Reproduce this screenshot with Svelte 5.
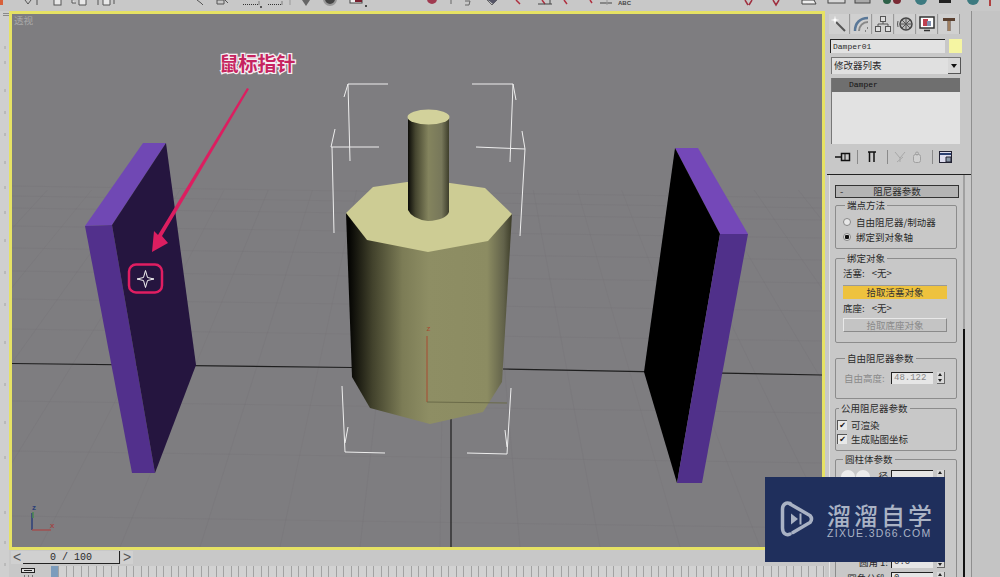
<script>
  // perspective floor grid of the viewport, in page coordinates
  const vanish = { x: 451, y: -250 };
  const floorTop = 190;
  const floorBottom = 547;
  const gridRays = [];
  for (let x = -600; x <= 1500; x += 80) {
    const t = (floorTop - vanish.y) / (floorBottom - vanish.y);
    gridRays.push({ x1: vanish.x + (x - vanish.x) * t, x2: x });
  }
  const gridRows = [190, 200, 212, 230, 252, 275, 303, 333, 405, 455, 520];
  const leftMarks = [35, 50, 78, 100, 122, 150, 175, 200, 228, 260, 292, 330, 372, 410, 445, 500, 530, 552];
</script>

<div class="app">
  <div class="toolbar">
    <svg viewBox="0 0 1000 11" width="1000" height="11">
      <rect x="0" y="0" width="3" height="5" fill="#d8603a" />
      <g fill="none" stroke="#555" stroke-width="1">
        <path d="M25 0l3 4 3-4M37 0v5" />
        <rect x="54" y="-3" width="7" height="8" fill="#e8e8e8" />
        <path d="M72 0v3h4M79 -3h7v8h-7z" fill="#e8e8e8" />
        <path d="M98 0v5M103 -3h7v8h-7zM114 0v4" fill="#e8e8e8" />
        <path d="M197 0l4 3 2 2M217 0h7v4h-7zM225 0l3 3" />
      </g>
      <g fill="none" stroke="#333" stroke-dasharray="1 1">
        <path d="M243 4.500h16v-4M268 4.500h14v-4" />
      </g>
      <circle cx="261" cy="7" r="1" fill="#333" />
      <path d="M290 0v5" stroke="#999" />
      <path d="M302 0h8l-4 6z" fill="#666" />
      <circle cx="330" cy="-1" r="6" fill="#444" stroke="#999" stroke-width="2" />
      <rect x="350" y="-2" width="12" height="5" fill="#eee" stroke="#444" />
      <rect x="355" y="-2" width="7" height="4" fill="#7a2030" />
      <circle cx="366" cy="6" r="1" fill="#222" />
      <circle cx="432" cy="-1" r="5" fill="#a03a50" />
      <path d="M451 0v4M465 1h5l-1 4h-4M487 0l5 5 5-5z" stroke="#666" fill="none" />
      <path d="M488 0h9l-4 4z" fill="#556" />
      <g stroke="#b03040" stroke-width="1.500" fill="none">
        <path d="M516 0l4 4M542 0l3 4M564 0l3 4M590 0l2 3" />
      </g>
      <path d="M538 4h14M550 0v4M600 3h12" stroke="#444" fill="none" />
      <path d="M607 0v5" stroke="#999" />
      <text class="abc" x="618" y="5">ABC</text>
      <g stroke="#a03040" stroke-width="1.500" fill="none">
        <path d="M745 0l3 5M752 0l-3 5M773 0l3 5 3-5" />
      </g>
      <path d="M802 0h12l2 4h-14z" fill="#eee" stroke="#444" />
      <rect x="828" y="-3" width="17" height="6" fill="#d8d8d8" stroke="#444" />
      <rect x="855" y="-3" width="15" height="6" fill="#aaa" stroke="#444" />
      <circle cx="887" cy="0" r="4" fill="#2d6048" />
      <circle cx="897" cy="0" r="4" fill="#7a2a34" />
      <circle cx="921" cy="-1" r="6" fill="#3d7a80" />
      <rect x="939" y="-3" width="12" height="6" fill="#222" />
      <circle cx="973" cy="-1" r="6" fill="#3d7a80" />
      <path d="M990 0v6" stroke="#b04040" stroke-width="2" />
    </svg>
  </div>

  <div class="main">
    <div class="left-strip">
      <svg viewBox="0 0 9 566" width="9" height="566">
        <path d="M3 2.500h6M3 4.500h6" stroke="#8a8a8a" />
        {#each leftMarks as y}
          <path d="M5 {y}v3" stroke="#a4a4a4" />
        {/each}
      </svg>
    </div>

    <div class="center">
      <div class="viewport">
        <svg viewBox="12 14 810 533" width="810" height="533">
          <defs>
            <linearGradient id="body" x1="346" x2="512" y1="0" y2="0" gradientUnits="userSpaceOnUse">
              <stop offset="0.02" stop-color="#050503" />
              <stop offset="0.16" stop-color="#42422c" />
              <stop offset="0.34" stop-color="#7c7c56" />
              <stop offset="0.5" stop-color="#8e8e64" />
              <stop offset="0.85" stop-color="#8c8c62" />
              <stop offset="0.95" stop-color="#62624a" />
              <stop offset="1" stop-color="#3c3c28" />
            </linearGradient>
            <linearGradient id="rod" x1="408" x2="449" y1="0" y2="0" gradientUnits="userSpaceOnUse">
              <stop offset="0" stop-color="#0c0c08" />
              <stop offset="0.18" stop-color="#45452f" />
              <stop offset="0.5" stop-color="#84845e" />
              <stop offset="0.82" stop-color="#77775a" />
              <stop offset="1" stop-color="#3e3e2b" />
            </linearGradient>
          </defs>

          <g class="grid">
            {#each gridRows as y}
              <line x1="12" y1={y - 4} x2="822" y2={y + 8} />
            {/each}
            {#each gridRays as ray}
              <line x1={ray.x1} y1={floorTop} x2={ray.x2} y2={floorBottom} />
            {/each}
          </g>

          <path class="axis-line" d="M12 363.500L352 367.500M503 369L822 375M451 418V547" />

          <!-- left plate -->
          <polygon fill="#7048b4" points="143,143 166,143 112,225 85,226" />
          <polygon fill="#52308c" points="85,226 112,225 155,473 132,473" />
          <polygon fill="#25153f" points="166,143 196,365 155,473 112,225" />

          <!-- right plate -->
          <polygon fill="#7448b8" points="675,148 698,148 748,234 720,234" />
          <polygon fill="#000" points="675,148 720,234 677,483 644,372" />
          <polygon fill="#50308a" points="720,234 748,234 702,483 677,483" />

          <!-- damper body -->
          <polygon fill="url(#body)" points="346,213 352,377 370,408 430,424 483,412 502,382 512,214" />
          <polygon fill="#cdcc94" points="346,213 373,187 407,182 450,183 485,188 512,214 488,241 428,252 367,240" />
          <path fill="url(#rod)" d="M408 117V210Q412 219 428 221Q446 220 449 212V117Z" />
          <ellipse cx="428.500" cy="117" rx="21" ry="7.500" fill="#d2d19b" />

          <!-- pivot gizmo -->
          <path d="M427 336V402" stroke="#a84a30" fill="none" />
          <path d="M427 402L507 403" stroke="#6a6a48" fill="none" />
          <text class="gizmo-z" x="426.500" y="331">z</text>

          <!-- selection brackets -->
          <g class="brackets">
            <path d="M388 84H348L344 97M348 84L350 161" />
            <path d="M379 147H331L335 129M332 147L334 233" />
            <path d="M472 84H513L516 100M513 84L510 162" />
            <path d="M476 147L525 149L522 131M525 149L520 236" />
            <path d="M342 386L345 452L385 453M345 443L348 427" />
            <path d="M511 388L507 454L467 453M507 447L505 430" />
          </g>

          <!-- annotation -->
          <polygon class="pink" points="247,88 249,89 162,236 168,243 152,252 154,231 158,235" />
          <rect class="pointer-box" x="129" y="264.500" width="33" height="28" rx="7" />
          <path class="pointer" d="M137 279L143.500 277.500L145.500 270.500L147.500 277.500L154 279L147.500 280.500L145.500 287.500L143.500 280.500Z" />
          <text class="note" x="257.500" y="71">鼠标指针</text>

          <text class="view-label" x="14" y="24">透视</text>

          <!-- world axis -->
          <path d="M32 530V513" stroke="#2c3f78" stroke-width="1.500" fill="none" />
          <path d="M33 518V512" stroke="#4a8a50" stroke-width="1.500" fill="none" />
          <path d="M32 530H51" stroke="#a05050" stroke-width="1.500" fill="none" />
          <text class="axis-z" x="32" y="510">z</text>
          <text class="axis-x" x="50" y="528">x</text>
        </svg>
      </div>

      <div class="time">
        <span class="time-btn">&lt;</span>
        <span class="time-pos">0 / 100</span>
        <span class="time-btn">&gt;</span>
      </div>

      <div class="track">
        <svg class="track-icon" viewBox="0 0 14 11" width="14" height="11">
          <rect x="0.500" y="1.500" width="13" height="4" fill="#ddd" stroke="#222" />
          <path d="M3 3.500h8" stroke="#222" />
          <path d="M3 9h1M7 9h1M11 9h1" stroke="#222" />
        </svg>
        <div class="ruler"><span class="thumb"></span></div>
      </div>
    </div>

    <aside class="panel">
      <div class="tabs">
        <span class="tab">
          <svg viewBox="0 0 16 16" width="16" height="16">
            <path d="M5 6L14 15" stroke="#555" stroke-width="2" />
            <path d="M4 0l1 3 3 1-3 1-1 3-1-3-3-1 3-1z" fill="#fff" stroke="#ddd" stroke-width="0.500" />
          </svg>
        </span>
        <span class="tab">
          <svg viewBox="0 0 16 16" width="16" height="16">
            <path d="M2 15C2 7 7 2 15 2" fill="none" stroke="#5a7898" stroke-width="2.500" />
            <path d="M6 15C6 10 10 6 15 6" fill="none" stroke="#888" stroke-width="2" />
            <path d="M12 15h1M14 12h1" stroke="#333" />
          </svg>
        </span>
        <span class="tab">
          <svg viewBox="0 0 16 16" width="16" height="16">
            <g fill="#ddd" stroke="#555">
              <rect x="5.500" y="0.500" width="5" height="5" />
              <rect x="0.500" y="10.500" width="5" height="5" />
              <rect x="10.500" y="10.500" width="5" height="5" />
            </g>
            <path d="M8 6V8M3 10V8H13V10" fill="none" stroke="#555" />
          </svg>
        </span>
        <span class="tab">
          <svg viewBox="0 0 16 16" width="16" height="16">
            <circle cx="9" cy="8" r="6" fill="#bbb" stroke="#444" stroke-width="1.500" />
            <path d="M9 2V14M3 8H15M5 4L13 12M13 4L5 12" stroke="#555" />
            <path d="M1 5Q0 8 1 11" fill="none" stroke="#555" />
          </svg>
        </span>
        <span class="tab">
          <svg viewBox="0 0 16 16" width="16" height="16">
            <rect x="1" y="1" width="14" height="11" fill="#fff" stroke="#333" stroke-width="1.500" />
            <rect x="4" y="3" width="5" height="7" fill="#c04050" />
            <rect x="8" y="5" width="4" height="5" fill="#8090b0" />
            <path d="M5 14.500H11" stroke="#333" stroke-width="1.500" />
          </svg>
        </span>
        <span class="tab">
          <svg viewBox="0 0 16 16" width="16" height="16">
            <path d="M2 2H14V5H9.500V15H6.500V5H2Z" fill="#5a4030" />
            <path d="M7 5H9V15H7Z" fill="#a08060" />
          </svg>
        </span>
      </div>

      <div class="name-row">
        <span class="name-field">Damper01</span>
        <span class="swatch"></span>
      </div>

      <div class="dropdown">
        <span class="dropdown-text">修改器列表</span>
        <span class="dropdown-btn"></span>
      </div>

      <div class="stack">
        <div class="stack-item">Damper</div>
      </div>

      <div class="stack-tools">
        <svg viewBox="0 0 16 10" width="16" height="10">
          <path d="M0 5H6" stroke="#111" stroke-width="1.500" />
          <rect x="6.500" y="1.500" width="8" height="7" fill="none" stroke="#111" stroke-width="1.500" />
          <path d="M10 2V8" stroke="#111" />
        </svg>
        <span class="tool-sep first"></span>
        <svg class="bars" viewBox="0 0 10 12" width="10" height="12">
          <path d="M1 1H9M2.500 1V11M7 1V11" stroke="#111" stroke-width="1.500" fill="none" />
        </svg>
        <span class="tool-sep"></span>
        <svg viewBox="0 0 12 12" width="12" height="12">
          <path d="M1 1L6 7L11 1M6 7V11M3 11L9 6" stroke="#a8a8a8" fill="none" />
        </svg>
        <svg viewBox="0 0 10 12" width="10" height="12">
          <rect x="1.500" y="3.500" width="7" height="8" rx="2" fill="#d0d0d0" stroke="#a0a0a0" />
          <circle cx="5" cy="2.500" r="1.500" fill="none" stroke="#a0a0a0" />
        </svg>
        <span class="tool-sep"></span>
        <svg viewBox="0 0 14 13" width="14" height="13">
          <rect x="0.500" y="0.500" width="12" height="11" fill="#dde" stroke="#223" />
          <path d="M1 3H12" stroke="#2a3f70" stroke-width="2" />
          <path d="M7 6H12V11H7Z" fill="#8a98a8" stroke="#223" />
        </svg>
      </div>

      <div class="divider"></div>

      <div class="scroll-area">
        <div class="rollouts">
          <div class="rollout-head"><span class="minus">-</span><span>阻尼器参数</span></div>

          <fieldset class="group g-ends">
            <legend>端点方法</legend>
            <label class="opt"><span class="radio"></span>自由阻尼器/制动器</label>
            <label class="opt"><span class="radio on"></span>绑定到对象轴</label>
          </fieldset>

          <fieldset class="group g-bind">
            <legend>绑定对象</legend>
            <div class="row">活塞: <span class="none">&lt;无&gt;</span></div>
            <div class="pick active">拾取活塞对象</div>
            <div class="row">底座: <span class="none">&lt;无&gt;</span></div>
            <div class="pick off">拾取底座对象</div>
          </fieldset>

          <fieldset class="group g-free">
            <legend>自由阻尼器参数</legend>
            <div class="num-row muted">
              <span class="num-label">自由高度:</span>
              <span class="num-input muted-input">48.122</span>
              <span class="spin"></span>
            </div>
          </fieldset>

          <fieldset class="group g-common">
            <legend>公用阻尼器参数</legend>
            <label class="check"><span class="box">✔</span>可渲染</label>
            <label class="check"><span class="box">✔</span>生成贴图坐标</label>
          </fieldset>

          <fieldset class="group g-cyl">
            <legend>圆柱体参数</legend>
            <div class="num-row first">
              <span class="radio big"></span><span class="radio big"></span><span class="num-label short">径</span>
              <span class="num-input"></span>
              <span class="spin"></span>
            </div>
            <div class="num-row low">
              <span class="num-label">圆角 1:</span>
              <span class="num-input">0.0</span>
              <span class="spin"></span>
            </div>
            <div class="num-row">
              <span class="num-label">圆角分段:</span>
              <span class="num-input">0</span>
              <span class="spin"></span>
            </div>
          </fieldset>
        </div>
        <div class="scrollbar"></div>
      </div>
    </aside>

    <div class="gutter"></div>
  </div>

  <div class="watermark">
    <svg viewBox="0 0 34 36" width="34" height="36">
      <path d="M10 2.500C6 1 2.500 3.500 2.500 8V27C2.500 32 6 35 10 33" fill="none" stroke="#a9b2c4" stroke-width="3.500" stroke-linecap="round" />
      <path d="M10 3L30 14.500Q33 18 30 21.500L13 31.500" fill="none" stroke="#a9b2c4" stroke-width="3.500" stroke-linecap="round" />
      <path d="M11 12.500L18 18L11 23.500Z" fill="#a9b2c4" />
      <path d="M20.500 12.500V23.500" stroke="#a9b2c4" stroke-width="2" />
    </svg>
    <div class="wm-text">
      <div class="wm-cn">溜溜自学</div>
      <div class="wm-en">ZIXUE.3D66.COM</div>
    </div>
  </div>
</div>

<style>
  :global(body) {
    margin: 0;
    background: #c8c8c8;
  }
  .app {
    position: relative;
    display: flex;
    flex-direction: column;
    width: 1000px;
    height: 577px;
    overflow: hidden;
    background: #c8c8c8;
    font-family: "Noto Sans CJK SC", "Liberation Sans", sans-serif;
    font-size: 9.500px;
    color: #2a2a2a;
  }
  svg {
    display: block;
  }
  .toolbar {
    height: 11px;
    flex: none;
  }
  .abc {
    font: bold 6px "Liberation Sans", sans-serif;
    fill: #444;
  }
  .main {
    display: flex;
    flex: 1;
    min-height: 0;
  }
  .left-strip {
    width: 9px;
    flex: none;
    background: #cfcfcf;
  }
  .center {
    width: 816px;
    flex: none;
    display: flex;
    flex-direction: column;
  }
  .viewport {
    border: 3px solid #e6e264;
    background: #7e7d80;
    height: 533px;
    flex: none;
  }
  .grid line {
    stroke: #727174;
    stroke-opacity: 0.25;
    stroke-width: 1;
  }
  .axis-line {
    stroke: #1e1e1e;
    stroke-width: 1.200;
    fill: none;
  }
  .brackets path {
    fill: none;
    stroke: #eeeeee;
    stroke-width: 1;
  }
  .gizmo-z {
    font: 8px "Liberation Sans", sans-serif;
    fill: #a84a30;
  }
  .pink {
    fill: #dc1e60;
  }
  .pointer-box {
    fill: none;
    stroke: #e01e62;
    stroke-width: 2.500;
  }
  .pointer {
    fill: #25153f;
    stroke: #f2f2f2;
    stroke-width: 1;
  }
  .note {
    font-size: 19px;
    font-weight: 700;
    text-anchor: middle;
    fill: #c6245f;
    stroke: #f6eef2;
    stroke-width: 2.500;
    paint-order: stroke;
  }
  .view-label {
    font-size: 9.500px;
    fill: #aaaaaa;
  }
  .axis-z {
    font: bold 8px "Liberation Sans", sans-serif;
    fill: #2c3f78;
  }
  .axis-x {
    font: bold 8px "Liberation Sans", sans-serif;
    fill: #a04848;
  }
  .time {
    display: flex;
    height: 13px;
    margin: 1px 0 0 2px;
    font: 10px/13px "Liberation Mono", monospace;
    flex: none;
  }
  .time-btn {
    width: 12px;
    text-align: center;
    color: #555;
    background: #d0d0d0;
    font: 14px/12px "Liberation Sans", sans-serif;
  }
  .time-pos {
    width: 97px;
    text-align: center;
    background: #d0d0d0;
    border-bottom: 1px solid #222;
    border-right: 1px solid #222;
    box-sizing: border-box;
    margin-right: 1px;
  }
  .track {
    display: flex;
    flex: 1;
    align-items: flex-start;
    margin-top: 2px;
  }
  .track-icon {
    margin-left: 12px;
    margin-top: 1px;
    flex: none;
  }
  .ruler {
    position: relative;
    flex: 1;
    height: 12px;
    margin-left: 16px;
    background: repeating-linear-gradient(90deg, #a2a2a2 0 1px, #d2d2d2 1px 7.500px);
  }
  .thumb {
    position: absolute;
    left: 0;
    top: 0;
    width: 7px;
    height: 12px;
    background: #7c9cbc;
  }

  .panel {
    width: 147px;
    flex: none;
    display: flex;
    flex-direction: column;
    box-sizing: border-box;
    border-right: 1px solid #8f8f8f;
    background: #c8c8c8;
  }
  .tabs {
    display: flex;
    flex: none;
    margin: 3px 0 0 4px;
    height: 20px;
  }
  .tab {
    width: 21px;
    margin-right: 1px;
    display: flex;
    justify-content: center;
    align-items: center;
    background: #d0d0d0;
    border-right: 1px solid #9a9a9a;
    box-sizing: border-box;
  }
  .name-row {
    display: flex;
    flex: none;
    margin: 5px 0 0 5px;
    height: 14px;
  }
  .name-field {
    width: 115px;
    box-sizing: border-box;
    background: #e2e2e2;
    border-top: 1px solid #222;
    border-left: 1px solid #222;
    font: 8px/13px "Liberation Mono", monospace;
    padding-left: 2px;
  }
  .swatch {
    width: 13px;
    margin-left: 4px;
    background: #f5f5a2;
  }
  .dropdown {
    display: flex;
    flex: none;
    margin: 4px 0 0 6px;
    width: 130px;
    height: 17px;
    background: #e0e0e0;
    border-left: 1px solid #777;
    border-top: 1px solid #777;
    box-sizing: border-box;
  }
  .dropdown-text {
    flex: 1;
    line-height: 15px;
    padding-left: 2px;
  }
  .dropdown-btn {
    position: relative;
    width: 13px;
    background: #d8d8d8;
    border-right: 1px solid #555;
    border-bottom: 1px solid #555;
    box-sizing: border-box;
  }
  .dropdown-btn::after {
    content: "";
    position: absolute;
    left: 3px;
    top: 6px;
    border: 3px solid transparent;
    border-top: 4px solid #111;
    border-bottom: 0;
  }
  .stack {
    flex: none;
    margin: 4px 0 0 6px;
    width: 129px;
    height: 66px;
    background: #e2e2e2;
    border-left: 1px solid #777;
    box-sizing: border-box;
  }
  .stack-item {
    height: 14px;
    background: #6f6f6f;
    color: #111;
    font: 8px/14px "Liberation Mono", monospace;
    padding-left: 17px;
  }
  .stack-tools {
    display: flex;
    flex: none;
    align-items: center;
    height: 14px;
    margin-top: 6px;
    padding-left: 10px;
    gap: 6px;
  }
  .tool-sep {
    width: 1px;
    height: 14px;
    background: #8a8a8a;
    margin-left: 4px;
  }
  .tool-sep.first {
    margin-left: 0;
  }
  .bars {
    margin-left: 3px;
  }
  .divider {
    flex: none;
    height: 1px;
    margin: 10px 0 0 2px;
    background: #222;
  }
  .scroll-area {
    flex: 1;
    min-height: 0;
    display: flex;
    overflow: hidden;
    border-left: 1px solid #e4e4e4;
    margin-left: 4px;
  }
  .rollouts {
    width: 133px;
    flex: none;
    display: flex;
    flex-direction: column;
    box-sizing: border-box;
    padding: 10px 0 0 5px;
  }
  .scrollbar {
    width: 2px;
    flex: none;
    background: linear-gradient(#a0a0a0 0 154px, #111 154px);
  }
  .rollout-head {
    position: relative;
    width: 124px;
    height: 13px;
    box-sizing: border-box;
    background: #b4b4b4;
    border: 1px solid #333;
    text-align: center;
    line-height: 11px;
    flex: none;
  }
  .minus {
    position: absolute;
    left: 4px;
  }
  .group {
    margin: 0;
    width: 122px;
    box-sizing: border-box;
    border: 1px solid #8c8c8c;
    border-radius: 2px;
    padding: 0 0 0 7px;
    flex: none;
  }
  legend {
    padding: 0 2px;
    margin-left: 2px;
    line-height: 12px;
    background: #c8c8c8;
  }
  .g-ends {
    height: 50px;
    margin-top: 1px;
  }
  .g-bind {
    height: 91px;
    margin-top: 3px;
  }
  .g-free {
    height: 47px;
    margin-top: 9px;
  }
  .g-common {
    height: 49px;
    margin-top: 3px;
    padding-left: 1px;
  }
  .g-cyl {
    height: 140px;
    margin-top: 2px;
    padding-left: 5px;
  }
  .opt {
    display: flex;
    align-items: center;
    height: 15px;
    gap: 5px;
  }
  .g-ends legend + .opt {
    margin-top: 3px;
  }
  .radio {
    width: 6px;
    height: 6px;
    border-radius: 50%;
    background: #e8e8e8;
    border: 1px solid #888;
    flex: none;
  }
  .radio.on {
    background: radial-gradient(circle, #111 0 2px, #e8e8e8 2.500px);
  }
  .radio.big {
    width: 14px;
    height: 13px;
    background: #ececec;
    border: 0;
    margin-right: 1px;
  }
  .row {
    height: 14px;
    line-height: 14px;
    margin-top: 2px;
  }
  .none {
    margin-left: 5px;
  }
  .pick {
    width: 104px;
    height: 14px;
    box-sizing: border-box;
    line-height: 13px;
    text-align: center;
    margin-top: 5px;
    margin-bottom: 2px;
  }
  .pick.active {
    background: #eec23e;
    color: #333;
    border-top: 1px solid #999;
  }
  .pick.off {
    margin-top: 3px;
    background: #c4c4c4;
    color: #8a8a8a;
    border: 1px solid #8a8a8a;
    border-left-color: #e8e8e8;
    border-top-color: #e8e8e8;
  }
  .num-row {
    display: flex;
    align-items: center;
    height: 12px;
  }
  .num-row.muted {
    margin-top: 8px;
    color: #8a8a8a;
  }
  .num-row.first {
    margin-top: 5px;
  }
  .num-row.low {
    margin-top: 74px;
    margin-bottom: 4px;
  }
  .num-label {
    width: 48px;
    flex: none;
    white-space: nowrap;
    padding-left: 1px;
    box-sizing: border-box;
  }
  .g-cyl .num-label {
    width: 50px;
    text-align: right;
    padding-right: 3px;
  }
  .g-cyl .num-label.short {
    width: 20px;
  }
  .num-input {
    width: 42px;
    height: 12px;
    flex: none;
    box-sizing: border-box;
    background: #e6e6e6;
    border-top: 1px solid #222;
    border-left: 1px solid #222;
    font: 9px/11px "Liberation Mono", monospace;
    padding-left: 2px;
    color: #333;
    overflow: hidden;
  }
  .muted-input {
    color: #888;
  }
  .spin {
    position: relative;
    width: 8px;
    height: 12px;
    margin-left: 4px;
    flex: none;
    background: #d8d8d8;
    border-right: 1px solid #666;
    border-bottom: 1px solid #666;
    box-sizing: border-box;
  }
  .spin::before,
  .spin::after {
    content: "";
    position: absolute;
    left: 1px;
    border: 2px solid transparent;
  }
  .spin::before {
    top: -1px;
    border-bottom: 3px solid #222;
    border-top: 0;
    margin-top: 2px;
  }
  .spin::after {
    bottom: 1px;
    border-top: 3px solid #222;
    border-bottom: 0;
  }
  .check {
    display: flex;
    align-items: center;
    height: 14px;
    gap: 4px;
  }
  .g-common legend + .check {
    margin-top: 4px;
  }
  .box {
    width: 9px;
    height: 9px;
    background: #e8e8e8;
    border-top: 1px solid #555;
    border-left: 1px solid #555;
    font: 8px/9px "DejaVu Sans", sans-serif;
    color: #111;
    text-align: center;
    flex: none;
  }
  .gutter {
    flex: 1;
    background: #c4c4c4;
  }

  .watermark {
    position: absolute;
    left: 765px;
    top: 477px;
    width: 180px;
    height: 85px;
    box-sizing: border-box;
    padding: 24px 0 0 15px;
    display: flex;
    gap: 13px;
    background: #1f2f5c;
    color: #aab3c5;
  }
  .wm-cn {
    font-size: 24px;
    font-weight: 500;
    line-height: 27px;
    letter-spacing: 3px;
    white-space: nowrap;
  }
  .wm-en {
    font: 10.500px/10px "Liberation Sans", sans-serif;
    letter-spacing: 1.300px;
    white-space: nowrap;
  }
</style>
